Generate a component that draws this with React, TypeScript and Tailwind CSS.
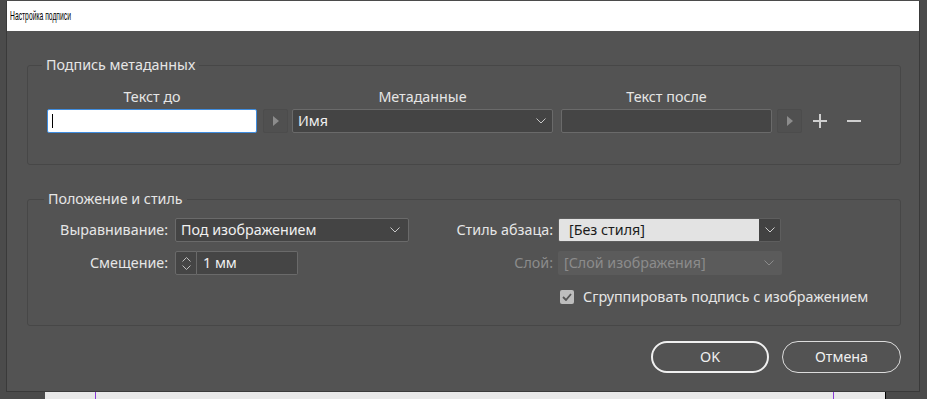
import React from "react";

function Chevron({ className = "" }: { className?: string }) {
  return (
    <svg width="10" height="6" viewBox="0 0 10 6" className={className}>
      <path d="M0.5 0.5 L5 5 L9.5 0.5" fill="none" stroke="currentColor" strokeWidth="1" />
    </svg>
  );
}

function ArrowButton() {
  return (
    <div className="flex h-[24px] w-[25px] items-center justify-center rounded-[2px] border border-[#4c4c4c] bg-[#505050]">
      <svg width="6" height="10" viewBox="0 0 6 10">
        <path d="M0 0 L6 5 L0 10 Z" fill="#8c8c8c" />
      </svg>
    </div>
  );
}

export default function App() {
  return (
    <div className="relative h-[399px] w-[927px] overflow-hidden bg-[#4b4b4b] font-['Noto_Sans',sans-serif] text-[14.3px] text-[#e6e6e6]">
      <div className="ml-[6px] mt-[1px] h-[391px] w-[914px] border-l border-r border-b border-[#3a3a3a] bg-[#535353]">
        {/* title bar */}
        <div className="flex h-[30px] items-center bg-white pl-[3px]">
          <span className="origin-left scale-x-[0.52] font-['Liberation_Sans',sans-serif] text-[13px] text-black">Настройка подписи</span>
        </div>

        <div className="pl-[20px] pr-[18px]">
          {/* metadata caption */}
          <fieldset className="mt-[24px] h-[110px] rounded-[3px] border border-[#474747]">
            <legend className="ml-[14px] px-[4px] leading-[20px] text-[#e6e6e6]">Подпись метаданных</legend>
            <div className="ml-[19px] mt-[12px] flex h-[20px] items-center leading-[20px]">
              <div className="w-[210px] text-center">Текст до</div>
              <div className="ml-[35px] w-[261px] text-center">Метаданные</div>
              <div className="ml-[8px] w-[211px] text-center">Текст после</div>
            </div>
            <div className="ml-[19px] mt-[2px] flex items-center">
              <div className="flex h-[24px] w-[210px] items-center rounded-[2px] border border-[#3f8de0] bg-white pl-[4px]">
                <div className="h-[14px] w-[1px] bg-black" />
              </div>
              <div className="ml-[6px]">
                <ArrowButton />
              </div>
              <div className="ml-[4px] flex h-[24px] w-[261px] items-center justify-between rounded-[2px] border border-[#6a6a6a] bg-[#444444] pl-[5px] pr-[6px] text-[#f0f0f0]">
                <span>Имя</span>
                <Chevron className="text-[#c8c8c8]" />
              </div>
              <div className="ml-[8px] h-[24px] w-[211px] rounded-[2px] border border-[#6a6a6a] bg-[#454545]" />
              <div className="ml-[5px]">
                <ArrowButton />
              </div>
              <svg width="14" height="14" viewBox="0 0 14 14" className="ml-[11px]">
                <path d="M7 0 V14 M0 7 H14" stroke="#cfcfcf" strokeWidth="2" />
              </svg>
              <svg width="14" height="14" viewBox="0 0 14 14" className="ml-[20px]">
                <path d="M0 7 H14" stroke="#cfcfcf" strokeWidth="2" />
              </svg>
            </div>
          </fieldset>

          {/* position and style */}
          <fieldset className="mt-[24px] h-[137px] rounded-[3px] border border-[#474747]">
            <legend className="ml-[16px] px-[4px] leading-[20px] text-[#e6e6e6]">Положение и стиль</legend>
            <div className="mt-[9px] flex items-center">
              <div className="w-[140px] text-right">Выравнивание:</div>
              <div className="ml-[7px] flex h-[24px] w-[234px] items-center justify-between rounded-[2px] border border-[#6a6a6a] bg-[#444444] pl-[5px] pr-[8px] text-[#f0f0f0]">
                <span>Под изображением</span>
                <Chevron className="text-[#c8c8c8]" />
              </div>
              <div className="w-[144px] text-right">Стиль абзаца:</div>
              <div className="ml-[5px] flex h-[24px] w-[223px] overflow-hidden rounded-[2px] border border-[#5e5e5e]">
                <div className="flex flex-1 items-center bg-[#e3e3e3] pl-[10px] text-[#1b1b1b]">[Без стиля]</div>
                <div className="flex w-[21px] items-center justify-center bg-[#424242]">
                  <Chevron className="text-[#d0d0d0]" />
                </div>
              </div>
            </div>
            <div className="mt-[9px] flex items-center">
              <div className="w-[140px] text-right">Смещение:</div>
              <div className="ml-[7px] flex h-[24px] w-[22px] flex-col items-center justify-center gap-[3px] rounded-l-[2px] border border-[#6a6a6a] bg-[#454545]">
                <svg width="9" height="5" viewBox="0 0 9 5">
                  <path d="M0.5 4.5 L4.5 0.5 L8.5 4.5" fill="none" stroke="#bdbdbd" strokeWidth="1" />
                </svg>
                <svg width="9" height="5" viewBox="0 0 9 5">
                  <path d="M0.5 0.5 L4.5 4.5 L8.5 0.5" fill="none" stroke="#bdbdbd" strokeWidth="1" />
                </svg>
              </div>
              <div className="flex h-[24px] w-[101px] items-center rounded-r-[2px] border border-l-0 border-[#6a6a6a] bg-[#454545] pl-[6px] text-[#f0f0f0]">
                1 мм
              </div>
              <div className="w-[255px] text-right text-[#8c8c8c]">Слой:</div>
              <div className="ml-[5px] flex h-[24px] w-[224px] items-center justify-between rounded-[2px] bg-[#5b5b5b] pl-[6px] pr-[8px] text-[#8c8c8c]">
                <span>[Слой изображения]</span>
                <Chevron className="text-[#8c8c8c]" />
              </div>
            </div>
            <div className="ml-[532px] mt-[11px] flex items-center">
              <div className="flex h-[14px] w-[14px] items-center justify-center rounded-[2px] bg-[#bdbdbd]">
                <svg width="10" height="8" viewBox="0 0 10 8">
                  <path d="M1 4 L4 7 L9 1" fill="none" stroke="#555555" strokeWidth="1.8" />
                </svg>
              </div>
              <span className="ml-[9px]">Сгруппировать подпись с изображением</span>
            </div>
          </fieldset>

          {/* buttons */}
          <div className="mt-[15px] flex justify-end gap-[13px]">
            <button className="h-[32px] w-[118px] rounded-full border-2 border-[#f0f0f0] text-[#f0f0f0]">OK</button>
            <button className="h-[32px] w-[119px] rounded-full border border-[#dcdcdc] text-[#f0f0f0]">Отмена</button>
          </div>
        </div>
      </div>

      {/* document strip behind the dialog */}
      <div className="ml-[45px] flex h-[8px] w-[841px] border-r border-black bg-[#e8e8e8]">
        <div className="ml-[50px] h-full w-[1px] bg-[#8a3bd8]" />
        <div className="ml-[737px] h-full w-[1px] bg-[#8a3bd8]" />
      </div>
    </div>
  );
}
